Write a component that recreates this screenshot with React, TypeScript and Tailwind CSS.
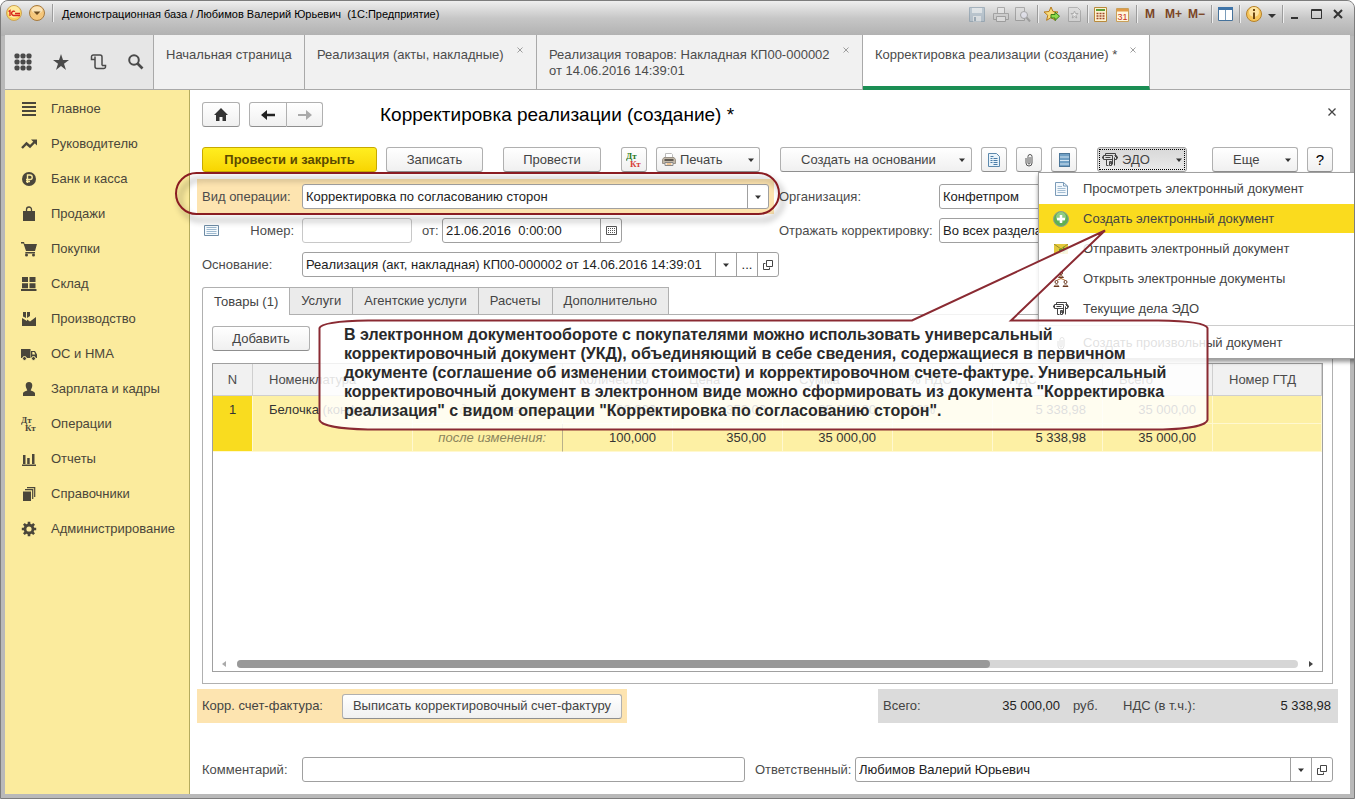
import React from 'react';

const CaretIcon: React.FC = () => (
    <svg width="6" height="4" viewBox="0 0 6 4" className="shrink-0" aria-hidden="true">
        <path d="M0 .5h6L3 4z" fill="#333" />
    </svg>
);

const OpenIcon: React.FC = () => (
    <svg width="10" height="10" viewBox="0 0 10 10" fill="none" stroke="#444" aria-hidden="true">
        <path d="M3.500.5h6v6h-6zM2.500 3.500h-2v6h6v-2" />
    </svg>
);

const EdoIcon: React.FC = () => (
    <svg width="16" height="15" viewBox="0 0 16 15" fill="none" stroke="#444" className="shrink-0" aria-hidden="true">
        <path d="M3.500 3V1.500h10V5M1.500 3.500h9v4h-9zM.5 4.500v2M12.500 3.500h2v4h-2M15.500 4.500v2M3.500 5.500h5M4.500 7.500v6h2M10.500 5.500v7M12.500 5.500v8M7.500 9.500h2v1.500h-2zM7.500 11h2v2.500h-2z" />
    </svg>
);

const ClipIcon: React.FC = () => (
    <svg width="8" height="14" viewBox="0 0 8 14" fill="none" stroke="#555" aria-hidden="true">
        <path d="M5 4v6a1 1 0 0 1-2 0V3.500a2 2 0 0 1 4 0V10a3 3 0 0 1-6 0V5" />
    </svg>
);

const DocIcon: React.FC = () => (
    <svg width="13" height="14" viewBox="0 0 13 14" fill="none" aria-hidden="true">
        <path d="M.5.5h8l4 3.500v9.500H.5z" fill="#f3f8fc" stroke="#7b9bb8" />
        <path d="M8.500.5V4h4" stroke="#7b9bb8" />
        <path d="M2.500 4.500H7M2.500 6.500h8M2.500 8.500h8M2.500 10.500h8" stroke="#a3bdd3" />
    </svg>
);

const ReportIcon: React.FC = () => (
    <svg width="12" height="14" viewBox="0 0 12 14" fill="none" aria-hidden="true">
        <path d="M.5.5h8l3 3v10H.5z" fill="#e9f3fa" stroke="#5d89ad" />
        <path d="M2.500 3.500h3M2.500 5.500h2M5.500 5.500h4M2.500 7.500h2M5.500 7.500h4M2.500 9.500h2M5.500 9.500h4M5.500 11.500h4" stroke="#4b7da8" />
    </svg>
);

const ListIcon: React.FC = () => (
    <svg width="11" height="14" viewBox="0 0 11 14" aria-hidden="true">
        <rect x=".5" y=".5" width="10" height="13" fill="#6f9fc4" stroke="#4c7698" />
        <path d="M1 4h9M1 7.500h9M1 11h9" stroke="#d5e6f3" />
    </svg>
);

const PrinterIcon: React.FC = () => (
    <svg width="14" height="13" viewBox="0 0 14 13" className="shrink-0" aria-hidden="true">
        <path d="M3.500 5V.5h6l1 1V5" fill="#fff" stroke="#bbb" />
        <path d="M2 4.500h10l1.500 2v4H.5v-4z" fill="#c2b8a8" stroke="#9a9287" />
        <path d="M2.500 7h9" stroke="#3e3a35" strokeWidth="1.500" />
        <path d="M3 9.500h8v3H3z" fill="#fff" stroke="#888" />
        <path d="M4.500 11h5" stroke="#e08a2a" />
    </svg>
);

const PlusIcon: React.FC = () => (
    <svg width="16" height="16" viewBox="0 0 16 16" aria-hidden="true">
        <circle cx="8" cy="8" r="7.500" fill="#5fb053" stroke="#8fa08c" />
        <circle cx="8" cy="6" r="5" fill="#8fcb84" />
        <path d="M8 4v8M4 8h8" stroke="#fff" strokeWidth="2.500" />
    </svg>
);

const SendIcon: React.FC = () => (
    <svg width="14" height="10" viewBox="0 0 14 10" aria-hidden="true">
        <path d="M0 0h14v10H0z" fill="#e3c93c" />
        <path d="M0 0l7 5 7-5" fill="none" stroke="#9a8a2b" />
        <path d="M5 5h4V2.500L13 6l-4 3.500V7.500H5z" fill="#5ca12e" />
    </svg>
);

const TreeIcon: React.FC = () => (
    <svg width="16" height="16" viewBox="0 0 16 16" fill="#fff" stroke="#6b3a22" aria-hidden="true">
        <path d="M8 4v4M3.500 11V9.500L8 7.500l4.500 2V11" fill="none" stroke="#c07a3a" />
        <circle cx="8" cy="2" r="1.500" />
        <path d="M5.500 6.500C6 4.500 10 4.500 10.500 6.500z" />
        <circle cx="3.500" cy="11" r="1.500" />
        <path d="M1 15.500c.5-2 4.500-2 5 0z" />
        <circle cx="12.500" cy="11" r="1.500" />
        <path d="M10 15.500c.5-2 4.500-2 5 0z" />
    </svg>
);

const DtKt: React.FC<{ dt: string; kt: string }> = ({ dt, kt }) => (
    <svg width="18" height="20" viewBox="0 0 18 20" className="-mr-0.5 shrink-0 font-['Liberation_Serif',serif] text-[9px] font-bold" aria-hidden="true">
        <text x="0" y="9" className={dt}>Дт</text>
        <text x="4" y="17" className={kt}>Кт</text>
    </svg>
);

const navItems: { label: string; icon: React.ReactNode }[] = [
    { label: 'Главное', icon: <path d="M1 2h14M1 6h14M1 10h14M1 14h14" fill="none" stroke="currentColor" strokeWidth="2" /> },
    {
        label: 'Руководителю',
        icon: (
            <>
                <path d="M1 12l4.500-4.500 3.500 3L13.500 6" fill="none" stroke="currentColor" strokeWidth="2.400" />
                <path d="M10 3.500h6v6z" />
            </>
        ),
    },
    {
        label: 'Банк и касса',
        icon: (
            <>
                <circle cx="8" cy="8" r="7" />
                <path d="M6.500 12V4h2.500a2.200 2.200 0 0 1 0 4.500H5M5 10.500h4" fill="none" stroke="#fbeb9d" strokeWidth="1.400" />
            </>
        ),
    },
    {
        label: 'Продажи',
        icon: (
            <>
                <path d="M2 5h12v10H2z" />
                <path d="M5.500 7V3.500a2.500 2.500 0 0 1 5 0V7" fill="none" stroke="currentColor" strokeWidth="1.300" />
            </>
        ),
    },
    {
        label: 'Покупки',
        icon: (
            <>
                <path d="M0 1h3l.6 2H16l-2 7H5L2.500 2.500H0zM4.500 11H14v1.500H4z" />
                <circle cx="5.500" cy="14" r="1.500" />
                <circle cx="12.500" cy="14" r="1.500" />
            </>
        ),
    },
    { label: 'Склад', icon: <path d="M1 1h6v5H1zM8.500 1h6v5h-6zM1 7.200h6v5H1zM8.500 7.200h6v5h-6zM0 13h15.500v2H0z" /> },
    { label: 'Производство', icon: <path d="M1 15V7l5 3V8.500l3 2 6-4.500v9zM2 1h3v6L2 5.500zM6 1h3v4L6 7z" /> },
    {
        label: 'ОС и НМА',
        icon: (
            <>
                <path fillRule="evenodd" d="M0 3h9.500v9H0zM10 5h4l2 3.500V12h-6zM11.300 6v2.500h3L13.200 6z" />
                <circle cx="3.500" cy="12.500" r="2" stroke="#fbeb9d" />
                <circle cx="12.500" cy="12.500" r="2" stroke="#fbeb9d" />
            </>
        ),
    },
    { label: 'Зарплата и кадры', icon: <path d="M8 1c2.200 0 3.300 1.500 3.300 3.500S10 8.500 9.700 9.300c0 .8 4.300 1 4.300 3.200V15H2v-2.500c0-2.200 4.300-2.400 4.300-3.200C6 8.500 4.700 6.500 4.700 4.500S5.800 1 8 1z" /> },
    { label: 'Операции', icon: null },
    { label: 'Отчеты', icon: <path d="M2 4h2.500v9H2zM6.200 7h2.500v6H6.200zM11 3h2.500v10H11zM1 13.500h14V15H1z" /> },
    {
        label: 'Справочники',
        icon: (
            <>
                <path d="M2 5.500h8V15H2z" />
                <path d="M4 3.700h7.700V13M6 1.700h7.700V11" fill="none" stroke="currentColor" strokeWidth="1.200" />
            </>
        ),
    },
    {
        label: 'Администрирование',
        icon: (
            <>
                <circle cx="8" cy="8" r="4" fill="none" stroke="currentColor" strokeWidth="2.800" />
                <path d="M8 .8v3M8 12.200v3M.8 8h3M12.200 8h3M2.900 2.900L5 5M11 11l2.100 2.100M2.900 13.100L5 11M11 5l2.100-2.100" fill="none" stroke="currentColor" strokeWidth="2.600" />
            </>
        ),
    },
];

const menuItems = [
    { label: 'Просмотреть электронный документ', icon: <DocIcon /> },
    { label: 'Создать электронный документ', icon: <PlusIcon />, active: true },
    { label: 'Отправить электронный документ', icon: <SendIcon /> },
    { label: 'Открыть электронные документы', icon: <TreeIcon /> },
    { label: 'Текущие дела ЭДО', icon: <EdoIcon /> },
];

const formTabs = ['Товары (1)', 'Услуги', 'Агентские услуги', 'Расчеты', 'Дополнительно'];

const Separator: React.FC = () => <span className="h-[18px] w-px bg-[#9c9c9c] shadow-[1px_0_0_#eee]" />;

const TitleBar: React.FC = () => (
    <header className="flex h-[35px] shrink-0 items-start bg-gradient-to-b from-[#efefef] via-[#c6c6c6] to-[#b1b1b1] pt-[3px] pr-[10px] pl-[5px]">
        <div className="flex h-[18px] items-center gap-[7px]">
            <svg width="16" height="16" viewBox="0 0 16 16" aria-hidden="true">
                <circle cx="8" cy="8" r="7.500" fill="#fbd35a" stroke="#c9a25a" />
                <circle cx="8" cy="7" r="6" fill="#ffeaa0" />
                <path d="M2.500 6.500L4 5.500V11M9 6.500a2.200 2.200 0 1 0-1.500 4H14M9 8.500H14" fill="none" stroke="#d8281c" strokeWidth="1.400" />
            </svg>
            <svg width="16" height="16" viewBox="0 0 16 16" aria-hidden="true">
                <circle cx="8" cy="8" r="7.500" fill="#f5c77c" stroke="#a5793e" />
                <ellipse cx="8" cy="5" rx="5.500" ry="3.500" fill="#fbe3b5" />
                <path d="M4.500 6.500h7L8 10z" fill="#6b4a1f" />
            </svg>
            <Separator />
        </div>
        <h1 className="ml-[9px] text-[11px] leading-5 whitespace-nowrap text-black">
            Демонстрационная база / Любимов Валерий Юрьевич&nbsp; (1С:Предприятие)
        </h1>
        <div className="ml-auto flex h-[20px] items-center gap-[6px] text-[12px] font-bold text-[#7a4525]">
            <button aria-label="Сохранить" className="opacity-60">
                <svg width="16" height="15" viewBox="0 0 16 15"><path d="M.5.5h15v14H.5z" fill="#a9bccb" stroke="#7d94a6" /><path d="M3 1h10v5H3zM4 9h8v5.500H4z" fill="#e3eaef" /><path d="M6 10v4" stroke="#7d94a6" strokeWidth="2" /></svg>
            </button>
            <button aria-label="Печать" className="ml-0.5 opacity-50">
                <svg width="16" height="15" viewBox="0 0 16 15" stroke="#777" fill="#ccc"><path d="M4.500 6V.5h7V6" fill="#eee" /><path d="M.5 6.500h15v6H.5z" /><path d="M3.500 9.500h9v5h-9z" fill="#eee" /></svg>
            </button>
            <button aria-label="Предварительный просмотр" className="opacity-50">
                <svg width="16" height="15" viewBox="0 0 16 15" stroke="#777" fill="#ddd"><path d="M.5.5h9v13h-9z" /><circle cx="9" cy="8" r="3.500" fill="#eef" /><path d="M11.500 10.500l3.500 4" strokeWidth="2" /></svg>
            </button>
            <Separator />
            <button aria-label="Добавить в избранное">
                <svg width="16" height="16" viewBox="0 0 16 16"><path d="M7 1l2 4.500 5 .5-3.800 3.300 1.200 5L7 11.700 2.600 14.300l1.200-5L0 6l5-.5z" fill="#f9dc7a" stroke="#b57a1c" /><path d="M7 8.500h4V6l4.500 4.200-4.500 4.300V12H7z" fill="#8edb4a" stroke="#3b7d1a" /></svg>
            </button>
            <button aria-label="Избранное" className="ml-0.5 opacity-50">
                <svg width="13" height="15" viewBox="0 0 13 15"><path d="M.5.5h9l3 3v11H.5z" fill="#ddd" stroke="#888" /><path d="M6.500 4l1 2.500H10L8 8.500l.8 2.500-2.300-1.500L4.200 11 5 8.500l-2-2h2.500z" fill="#fff" stroke="#888" /></svg>
            </button>
            <Separator />
            <button aria-label="Калькулятор">
                <svg width="14" height="15" viewBox="0 0 14 15"><path d="M.5.5h12v14H.5z" fill="#fdf3d0" stroke="#b98a3c" /><path d="M2 2h9v2H2z" fill="#5e9c3a" /><path d="M2.500 6.500h8M2.500 9h8M2.500 11.500h8" stroke="#a0452a" strokeWidth="1.500" strokeDasharray="2 1" /></svg>
            </button>
            <button aria-label="Календарь" className="ml-0.5">
                <svg width="14" height="15" viewBox="0 0 14 15"><path d="M.5 1.500h12v13H.5z" fill="#fff6dd" stroke="#c9a05a" /><path d="M1 2h11v2.500H1z" fill="#e29a45" /><text x="1.500" y="13" fill="#c8321c" className="text-[9px] font-normal">31</text></svg>
            </button>
            <Separator />
            <button className="ml-0.5">М</button>
            <button className="ml-1">М+</button>
            <button>М−</button>
            <Separator />
            <button aria-label="Панели">
                <svg width="15" height="14" viewBox="0 0 15 14"><path d="M.5.5h14v13H.5z" fill="#fff" stroke="#45729b" /><path d="M0 1.500h15" stroke="#3f74a8" strokeWidth="3" /><path d="M7.500 3v10" stroke="#7a9cba" /></svg>
            </button>
            <Separator />
            <button aria-label="Информация" className="flex items-center gap-[6px]">
                <svg width="16" height="16" viewBox="0 0 16 16"><circle cx="8" cy="8" r="7.500" fill="#f6c55a" stroke="#b5812b" /><circle cx="8" cy="6" r="5" fill="#fce3a1" /><path d="M8 3v2M8 6.500V13" stroke="#6b4712" strokeWidth="2" /></svg>
                <svg width="8" height="10" viewBox="0 0 8 10"><path d="M0 5h8L4 9z" fill="#333" /></svg>
            </button>
            <Separator />
            <button aria-label="Свернуть" className="ml-0.5">
                <svg width="8" height="12" viewBox="0 0 8 12"><path d="M0 10h7" stroke="#333" strokeWidth="2" /></svg>
            </button>
            <button aria-label="Развернуть" className="ml-[6px]">
                <svg width="12" height="11" viewBox="0 0 12 11"><path d="M.5.5h10v9H.5zM0 1.500h11" fill="none" stroke="#333" /></svg>
            </button>
            <button aria-label="Закрыть окно" className="ml-1">
                <svg width="11" height="10" viewBox="0 0 11 10"><path d="M1 1l8 8M9 1L1 9" stroke="#333" strokeWidth="2" /></svg>
            </button>
        </div>
    </header>
);

const WindowTab: React.FC<{ children: React.ReactNode; width: string; active?: boolean; closable?: boolean }> = ({ children, width, active, closable = true }) => (
    <div className={`flex shrink-0 items-start justify-between border-r border-r-[#a9a9a9] pt-3 pr-3 pl-3 ${width} ${active ? 'border-b-4 border-b-[#1b8e54] bg-white' : 'border-b border-b-[#a9a9a9] bg-[#f1f1f1]'}`}>
        <button role="tab" aria-selected={!!active} className="text-left leading-4 whitespace-nowrap text-[#4b4b4b]">{children}</button>
        {closable && (
            <button aria-label="Закрыть вкладку" className="shrink-0">
                <svg width="7" height="6" viewBox="0 0 7 6"><path d="M.5.5l5 5M5.500.5l-5 5" stroke="#888" strokeWidth=".8" /></svg>
            </button>
        )}
    </div>
);

const WindowTabs: React.FC = () => (
    <div className="flex h-[55px] shrink-0 bg-[#f1f1f1]">
        <div className="flex w-[149px] shrink-0 items-center gap-[21px] border-r border-b border-[#a9a9a9] bg-[#e6e6e6] pl-[9px] text-[#4a4a4a]">
            <button aria-label="Меню функций">
                <svg width="18" height="18" viewBox="0 0 18 18" fill="currentColor">
                    {[3, 9, 15].map((y) => [3, 9, 15].map((x) => <rect key={`${x}-${y}`} x={x - 2.5} y={y - 2.5} width="5" height="5" rx="1.700" />))}
                </svg>
            </button>
            <button aria-label="Избранное">
                <svg width="16" height="16" viewBox="0 0 16 16" fill="currentColor"><path d="M8 0l2 6h6l-5 3.700L13 16l-5-3.900L3 16l2-6.300L0 6h6z" /></svg>
            </button>
            <button aria-label="История">
                <svg width="17" height="16" viewBox="0 0 17 16" fill="none" stroke="currentColor" strokeWidth="1.500"><path d="M5 5.500H1.500V2.800A1.800 1.800 0 0 1 3.300 1H10a2 2 0 0 1 2 2v8.500M5 2.500v10a2 2 0 0 0 2 2h6.700a1.800 1.800 0 0 0 1.800-1.800v-1.200H12" /></svg>
            </button>
            <button aria-label="Поиск">
                <svg width="16" height="16" viewBox="0 0 16 16" fill="none" stroke="currentColor"><circle cx="6" cy="6" r="4.800" strokeWidth="2" /><path d="M9.500 9.500l5 5" strokeWidth="2.600" /></svg>
            </button>
        </div>
        <WindowTab width="w-[151px]" closable={false}>Начальная страница</WindowTab>
        <WindowTab width="w-[232px]">Реализация (акты, накладные)</WindowTab>
        <WindowTab width="w-[326px]">Реализация товаров: Накладная КП00-000002<br />от 14.06.2016 14:39:01</WindowTab>
        <WindowTab width="w-[287px]" active>Корректировка реализации (создание) *</WindowTab>
        <div className="flex-1 border-b border-[#a9a9a9]" />
    </div>
);

const Sidebar: React.FC = () => (
    <nav className="w-[185px] shrink-0 border-r border-[#b5ab5e] bg-[#fbeb9d] pt-px">
        {navItems.map((item) => (
            <a key={item.label} href="#" className="flex h-[35px] items-center gap-[14px] pl-4 text-[#4a463a]">
                {item.icon ? (
                    <svg width="16" height="16" viewBox="0 0 16 16" fill="currentColor" aria-hidden="true">{item.icon}</svg>
                ) : (
                    <DtKt dt="fill-[#4a463a]" kt="fill-[#4a463a]" />
                )}
                {item.label}
            </a>
        ))}
    </nav>
);

const tones = {
    plain: 'border-[#b0b0b0] border-b-[#8f8f8f] from-white to-[#f0f0f0] text-[#444]',
    primary: 'border-[#c7a900] from-[#ffee1f] to-[#f8d500] font-bold text-[#5b4a00]',
    pressed: 'border-[#a0a0a0] from-[#d8d8d8] to-[#eaeaea] text-[#444]',
};

interface ButtonProps extends React.ComponentProps<'button'> {
    tone?: keyof typeof tones;
}

const Button: React.FC<ButtonProps> = ({ tone = 'plain', className = '', children, ...rest }) => (
    <button className={`flex h-[25px] items-center justify-center rounded-[3px] border bg-gradient-to-b whitespace-nowrap ${tones[tone]} ${className}`} {...rest}>
        {children}
    </button>
);

const boxClass = 'flex h-[25px] min-w-0 overflow-hidden rounded-[3px] border border-[#a0a0a0] bg-white text-[#222]';
const sideClass = 'flex w-[21px] shrink-0 items-center justify-center border-l border-[#a0a0a0]';

const SelectBox: React.FC<{ id: string; value: string; className: string }> = ({ id, value, className }) => (
    <div className={`${boxClass} ${className}`}>
        <select id={id} className="min-w-0 flex-1 appearance-none px-[3px] outline-none">
            <option>{value}</option>
        </select>
        <span className={sideClass}><CaretIcon /></span>
    </div>
);

const EdoMenu: React.FC = () => (
    <div role="menu" className="absolute top-[25px] -left-[59px] z-20 w-[340px] border border-[#a0a0a0] bg-white text-[#444] shadow-[0_3px_4px_rgba(0,0,0,0.4)]">
        {menuItems.map((item) => (
            <button key={item.label} role="menuitem" className={`flex h-[30px] w-full items-center border-t border-white text-left ${item.active ? 'bg-[#fadb1e]' : ''}`}>
                <span className="flex w-[44px] justify-center">{item.icon}</span>
                {item.label}
            </button>
        ))}
        <div className="mt-0.5 border-t border-[#ccc] pt-0.5">
            <button role="menuitem" className="flex h-[30px] w-full items-center text-left">
                <span className="flex w-[44px] justify-center"><ClipIcon /></span>
                Создать произвольный документ
            </button>
        </div>
    </div>
);

const Toolbar: React.FC = () => (
    <div className="mt-5 flex gap-5">
        <div className="flex gap-[9px]">
            <Button tone="primary" className="w-[175px]">Провести и закрыть</Button>
            <Button className="w-[97px]">Записать</Button>
        </div>
        <Button className="w-[98px]">Провести</Button>
        <div className="flex gap-[9px]">
            <Button className="w-[26px]" aria-label="Дт/Кт"><DtKt dt="fill-[#2c7a1c]" kt="fill-[#d8403a]" /></Button>
            <Button className="w-[104px] gap-1 px-[5px]"><PrinterIcon />Печать<span className="ml-auto"><CaretIcon /></span></Button>
        </div>
        <div className="flex gap-[9px]">
            <Button className="w-[192px] pr-[6px] pl-5">Создать на основании<span className="ml-auto"><CaretIcon /></span></Button>
            <Button className="w-[26px]" aria-label="Отчет"><ReportIcon /></Button>
            <Button className="w-[26px]" aria-label="Присоединенные файлы"><ClipIcon /></Button>
            <Button className="w-[26px]" aria-label="Список"><ListIcon /></Button>
        </div>
        <div className="relative">
            <Button tone="pressed" className="w-[90px] p-px">
                <span className="flex h-full w-full items-center gap-1 border border-dotted border-black px-0.5">
                    <EdoIcon />ЭДО<span className="ml-auto"><CaretIcon /></span>
                </span>
            </Button>
            <EdoMenu />
        </div>
        <div className="ml-auto flex gap-[9px]">
            <Button className="w-[86px] pr-[6px] pl-5">Еще<span className="ml-auto"><CaretIcon /></span></Button>
            <Button className="w-[26px] text-[15px]"><span className="text-black">?</span></Button>
        </div>
    </div>
);

const FormFields: React.FC = () => (
    <div className="mt-3 flex text-[#4b4b4b]">
        <div className="flex w-[577px] shrink-0 flex-col gap-[9px]">
            <div className="relative -mx-[5px] -my-[5px] mr-[5px] flex bg-[#fde4b0] p-[5px]">
                <label htmlFor="operation" className="w-[100px] leading-[25px]">Вид операции:</label>
                <SelectBox id="operation" value="Корректировка по согласованию сторон" className="flex-1" />
                <div className="pointer-events-none absolute -top-[7px] -right-[6px] -bottom-px -left-[22px] z-10 rounded-full border-2 border-[#8a1c22] drop-shadow-[4px_6px_3px_rgba(0,0,0,0.45)]" />
            </div>
            <div className="flex items-center">
                <svg width="15" height="11" viewBox="0 0 15 11" className="ml-0.5" aria-hidden="true">
                    <path d="M.5.5h14v10H.5z" fill="#f5fafd" stroke="#6e8ca6" />
                    <path d="M2.500 2.500h10M2.500 4.500h10M2.500 6.500h10M2.500 8.500h10" stroke="#9db8ce" />
                </svg>
                <label htmlFor="number" className="w-[83px] pr-2 text-right">Номер:</label>
                <input id="number" className="h-[25px] w-[110px] rounded-[3px] border border-[#c8c8c8] px-[3px]" />
                <label htmlFor="date" className="w-[30px] pl-[10px]">от:</label>
                <div className={`${boxClass} w-[180px]`}>
                    <input id="date" defaultValue="21.06.2016  0:00:00" className="min-w-0 flex-1 px-[3px] whitespace-pre" />
                    <button className={sideClass} aria-label="Выбрать дату">
                        <svg width="11" height="9" viewBox="0 0 11 9"><path d="M.5.5h10v8H.5z" fill="none" stroke="#555" /><path d="M2 2.500h7M2 4.500h7M2 6.500h7" stroke="#555" strokeDasharray="1 1" /></svg>
                    </button>
                </div>
            </div>
            <div className="flex items-center">
                <label htmlFor="basis" className="w-[100px]">Основание:</label>
                <div className={`${boxClass} flex-1`}>
                    <input id="basis" defaultValue="Реализация (акт, накладная) КП00-000002 от 14.06.2016 14:39:01" className="min-w-0 flex-1 px-[3px]" />
                    <button className={sideClass} aria-label="Выбрать из списка"><CaretIcon /></button>
                    <button className={sideClass} aria-label="Выбрать">...</button>
                    <button className={sideClass} aria-label="Открыть"><OpenIcon /></button>
                </div>
            </div>
        </div>
        <div className="flex min-w-0 flex-1 flex-col gap-[9px]">
            <div className="flex items-center">
                <label htmlFor="org" className="w-[160px] shrink-0">Организация:</label>
                <SelectBox id="org" value="Конфетпром" className="flex-1" />
            </div>
            <div className="flex items-center">
                <label htmlFor="reflect" className="w-[160px] shrink-0">Отражать корректировку:</label>
                <SelectBox id="reflect" value="Во всех разделах учета" className="flex-1" />
            </div>
        </div>
    </div>
);

const headCell = 'border-r border-b border-[#cfcfcf] pl-4 text-left font-normal';
const cell = 'border-r border-b border-[#fff8d0]';
const numCell = `${cell} pr-4 text-right`;

const GoodsTable: React.FC = () => (
    <div className="mt-3 flex flex-1 flex-col justify-between border border-[#a0a0a0]">
        <table className="w-full table-fixed border-separate border-spacing-0 whitespace-nowrap">
            <colgroup>
                <col className="w-[40px]" />
                <col className="w-[160px]" />
                <col className="w-[150px]" />
                <col className="w-[110px]" />
                <col className="w-[110px]" />
                <col className="w-[110px]" />
                <col className="w-[100px]" />
                <col className="w-[110px]" />
                <col className="w-[110px]" />
                <col />
            </colgroup>
            <thead>
                <tr className="h-[32px] bg-[#f1f1f1] text-[#4b4b4b]">
                    <th className="border-r border-b border-[#cfcfcf] font-normal">N</th>
                    <th colSpan={2} className={headCell}>Номенклатура</th>
                    <th className={headCell}>Количество</th>
                    <th className={headCell}>Цена</th>
                    <th className={headCell}>Сумма</th>
                    <th className={headCell}>% НДС</th>
                    <th className={headCell}>НДС</th>
                    <th className={headCell}>Всего</th>
                    <th className={headCell}>Номер ГТД</th>
                </tr>
            </thead>
            <tbody className="bg-[#fdf0a4] text-[#333]">
                <tr className="h-7">
                    <td rowSpan={2} className={`${cell} bg-[#f9dc1f] pt-[6px] text-center align-top`}>1</td>
                    <td rowSpan={2} className={`${cell} pt-[6px] pl-4 align-top`}>Белочка (конфеты)</td>
                    <td className={`${numCell} text-[#8a845c] italic`}>до изменения:</td>
                    <td className={numCell}>100,000</td>
                    <td className={numCell}>350,00</td>
                    <td className={numCell}>35 000,00</td>
                    <td className={`${cell} pl-4`}>18%</td>
                    <td className={numCell}>5 338,98</td>
                    <td className={numCell}>35 000,00</td>
                    <td className={cell} />
                </tr>
                <tr className="h-7">
                    <td className="border-r border-b border-r-[#b8b08a] border-b-[#fff8d0] pr-4 text-right text-[#8a845c] italic">после изменения:</td>
                    <td className={numCell}>100,000</td>
                    <td className={numCell}>350,00</td>
                    <td className={numCell}>35 000,00</td>
                    <td className={cell} />
                    <td className={numCell}>5 338,98</td>
                    <td className={numCell}>35 000,00</td>
                    <td className={cell} />
                </tr>
            </tbody>
        </table>
        <div className="flex h-[14px] items-center px-[9px]">
            <svg width="4" height="6" viewBox="0 0 4 6" aria-hidden="true"><path d="M4 0v6L0 3z" fill="#aaa" /></svg>
            <div className="mx-[11px] h-2 flex-1 rounded-full bg-[#d6d6d6]">
                <div className="h-2 w-[71%] rounded-full bg-[#999]" />
            </div>
            <svg width="4" height="6" viewBox="0 0 4 6" aria-hidden="true"><path d="M0 0v6l4-3z" fill="#444" /></svg>
        </div>
    </div>
);

const FormFooter: React.FC = () => (
    <>
        <div className="-mx-[5px] mt-[5px] flex justify-between text-[#444]">
            <div className="flex h-[34px] items-center bg-[#fde4b0] px-[5px]">
                <span className="w-[140px]">Корр. счет-фактура:</span>
                <Button className="w-[280px]">Выписать корректировочный счет-фактуру</Button>
            </div>
            <div className="flex h-[34px] w-[460px] items-center bg-[#dbdbdb] pr-[7px] pl-[5px]">
                <span className="w-[60px]">Всего:</span>
                <span className="w-[117px] text-right text-[#222]">35 000,00</span>
                <span className="w-[63px] pl-[13px]">руб.</span>
                <span>НДС (в т.ч.):</span>
                <span className="ml-auto text-[#222]">5 338,98</span>
            </div>
        </div>
        <div className="mt-[34px] flex items-center text-[#4b4b4b]">
            <label htmlFor="comment" className="w-[100px] shrink-0">Комментарий:</label>
            <input id="comment" className={`${boxClass} w-[443px] px-[3px]`} />
            <label htmlFor="responsible" className="w-[110px] shrink-0 pl-[10px]">Ответственный:</label>
            <div className={`${boxClass} flex-1`}>
                <input id="responsible" defaultValue="Любимов Валерий Юрьевич" className="min-w-0 flex-1 px-[3px]" />
                <button className={sideClass} aria-label="Выбрать из списка"><CaretIcon /></button>
                <button className={sideClass} aria-label="Открыть"><OpenIcon /></button>
            </div>
        </div>
    </>
);

const Callout: React.FC = () => (
    <div className="absolute top-[228px] left-[317px] z-30 w-[891px]">
        <svg width="891" height="202" viewBox="0 0 891 202" className="absolute top-0 left-0" aria-hidden="true">
            <path
                d="M50 91.500H594L787 1.500L693 91.500H840C868 92 888 94 889.500 99V191C888 197 868 200 845 200.500H50C24 200 3 197 1.500 191V99C3 94 24 92 50 91.500Z"
                fill="#fff"
                fillOpacity=".84"
                stroke="#8a2a32"
                strokeWidth="2"
            />
        </svg>
        <p className="relative pt-24 pl-[26px] text-[16px] leading-[19px] font-bold whitespace-nowrap text-[#2a2a2a]">
            В электронном документообороте с покупателями можно использовать универсальный<br />
            корректировочный документ (УКД), объединяющий в себе сведения, содержащиеся в первичном<br />
            документе (соглашение об изменении стоимости) и корректировочном счете-фактуре. Универсальный<br />
            корректировочный документ в электронном виде можно сформировать из документа "Корректировка<br />
            реализация" с видом операции "Корректировка по согласованию сторон".
        </p>
    </div>
);

export default function App() {
    return (
        <div className="relative flex min-h-screen flex-col overflow-hidden rounded-t-lg border border-[#7d7d7d] bg-[#b9b9b9] font-['Liberation_Sans',Arial,sans-serif] text-[13px] leading-4">
            <TitleBar />
            <div className="mx-1 -mt-px mb-1 flex flex-1 flex-col bg-white">
                <WindowTabs />
                <div className="flex flex-1">
                    <Sidebar />
                    <main className="flex min-w-0 flex-1 flex-col pt-3 pr-[17px] pb-3 pl-3">
                        <div className="flex items-center">
                            <Button className="w-[38px]" aria-label="Начальная страница">
                                <svg width="14" height="13" viewBox="0 0 14 13" fill="#333"><path d="M7 0l7 7h-2v6H8.500V9h-3v4H2V7H0z" /></svg>
                            </Button>
                            <Button className="ml-[9px] w-[38px] rounded-r-none" aria-label="Назад">
                                <svg width="14" height="10" viewBox="0 0 14 10" fill="#222"><path d="M0 5l6-5v3.700h8v2.600H6V10z" /></svg>
                            </Button>
                            <Button className="w-[36px] rounded-l-none border-l-0" aria-label="Вперед">
                                <svg width="14" height="10" viewBox="0 0 14 10" fill="#aaa"><path d="M14 5L8 0v3.900H0v2.200h8V10z" /></svg>
                            </Button>
                            <h2 className="ml-[57px] text-[19px] leading-[25px] text-black">Корректировка реализации (создание) *</h2>
                            <button className="mr-[-3px] mb-[5px] ml-auto" aria-label="Закрыть">
                                <svg width="8" height="8" viewBox="0 0 8 8"><path d="M.5.5l7 7M7.500.5l-7 7" stroke="#444" strokeWidth="1.300" /></svg>
                            </button>
                        </div>
                        <Toolbar />
                        <FormFields />
                        <div role="tablist" className="mt-[10px] flex h-7">
                            {formTabs.map((tab, i) => (
                                <button
                                    key={tab}
                                    role="tab"
                                    aria-selected={i === 0}
                                    className={`border-t border-r border-[#b0b0b0] px-[11px] text-[#444] ${i === 0 ? 'z-[1] rounded-tl-[3px] border-l bg-white' : 'border-b bg-[#ebebeb]'}`}
                                >
                                    {tab}
                                </button>
                            ))}
                        </div>
                        <section className="-mt-px flex flex-1 flex-col border border-[#b0b0b0] px-[9px] pt-[11px] pb-[11px]">
                            <Button className="w-[98px]">Добавить</Button>
                            <GoodsTable />
                        </section>
                        <FormFooter />
                    </main>
                </div>
            </div>
            <Callout />
        </div>
    );
}
